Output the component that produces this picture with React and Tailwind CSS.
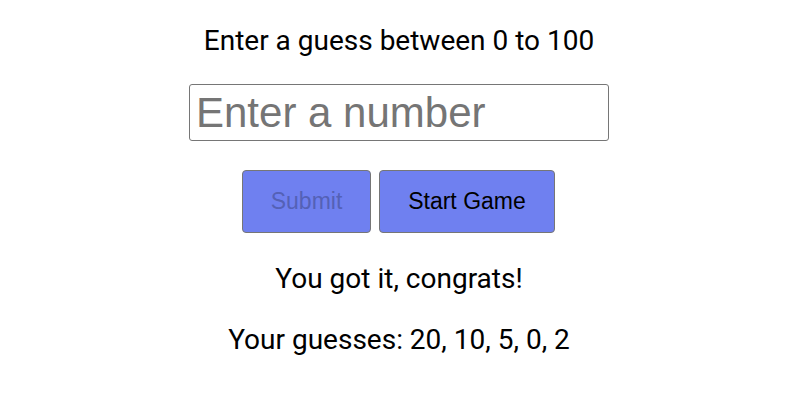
export default function App() {
  return (
    <div className="w-[798px] flex flex-col items-center pt-[24px] font-['Roboto',sans-serif] text-black">
      <p className="text-[28px] leading-[33px]">Enter a guess between 0 to 100</p>
      <input
        type="number"
        placeholder="Enter a number"
        className="mt-[27px] w-[420px] h-[57px] px-[6px] border border-[#767676] rounded-[3px] font-['Liberation_Sans',Arial,sans-serif] text-[42px] placeholder:text-[#757575] outline-none"
      />
      <div className="mt-[29px] pr-[1px] flex gap-2">
        <button
          disabled
          className="w-[129px] h-[63px] bg-[#6f80f0] border border-[#767676] rounded-[4px] font-['Liberation_Sans',Arial,sans-serif] text-[23px] text-[#5461b6]"
        >
          Submit
        </button>
        <button className="w-[176px] h-[63px] bg-[#6f80f0] border border-[#767676] rounded-[4px] font-['Liberation_Sans',Arial,sans-serif] text-[23px] text-black">
          Start Game
        </button>
      </div>
      <p className="mt-[29px] text-[28px] leading-[33px]">You got it, congrats!</p>
      <p className="mt-[28px] text-[28px] leading-[33px]">Your guesses: 20, 10, 5, 0, 2</p>
    </div>
  );
}
